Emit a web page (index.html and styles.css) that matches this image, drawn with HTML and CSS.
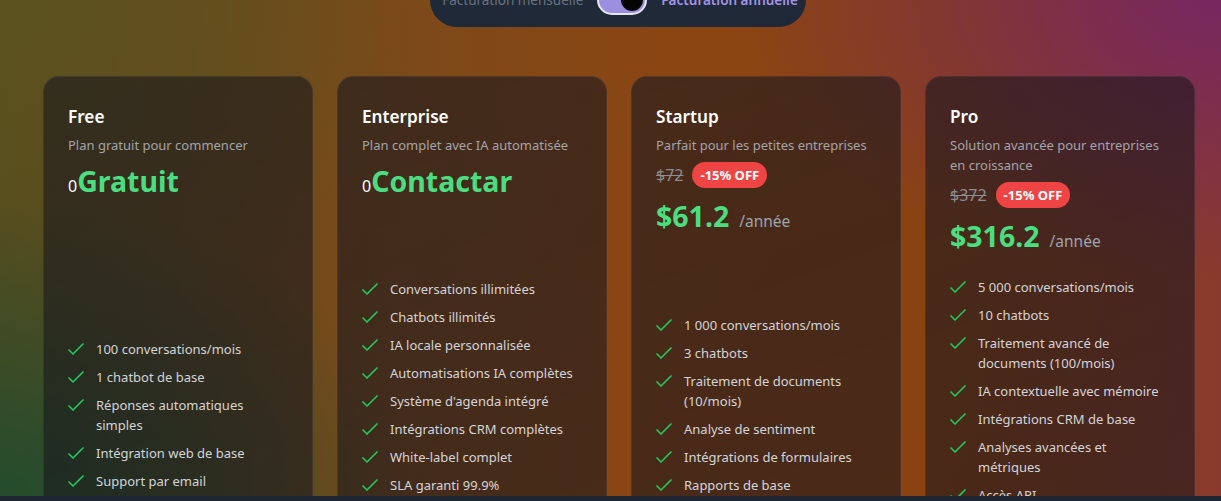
FILE: index.html
```html
<!DOCTYPE html>
<html lang="fr">
<head>
<meta charset="utf-8">
<title>Tarifs</title>
<link rel="stylesheet" href="styles.css">
</head>
<body>
<div class="page">
  <div class="billing">
    <span class="billing__label">Facturation mensuelle</span>
    <span class="switch"><span class="switch__knob"></span></span>
    <span class="billing__label billing__label--active">Facturation annuelle</span>
  </div>

  <div class="plans">
    <div class="card">
      <h3 class="card__title">Free</h3>
      <p class="card__desc">Plan gratuit pour commencer</p>
      <div class="price"><span class="price__zero">0</span><span class="price__value">Gratuit</span></div>
      <ul class="features features--free">
        <li class="feature"><svg class="check" viewBox="4 4 16 16"><path d="M5 13l4 4L19 7"/></svg><span>100 conversations/mois</span></li>
        <li class="feature"><svg class="check" viewBox="4 4 16 16"><path d="M5 13l4 4L19 7"/></svg><span>1 chatbot de base</span></li>
        <li class="feature"><svg class="check" viewBox="4 4 16 16"><path d="M5 13l4 4L19 7"/></svg><span>Réponses automatiques simples</span></li>
        <li class="feature"><svg class="check" viewBox="4 4 16 16"><path d="M5 13l4 4L19 7"/></svg><span>Intégration web de base</span></li>
        <li class="feature"><svg class="check" viewBox="4 4 16 16"><path d="M5 13l4 4L19 7"/></svg><span>Support par email</span></li>
      </ul>
    </div>

    <div class="card">
      <h3 class="card__title">Enterprise</h3>
      <p class="card__desc">Plan complet avec IA automatisée</p>
      <div class="price"><span class="price__zero">0</span><span class="price__value">Contactar</span></div>
      <ul class="features features--enterprise">
        <li class="feature"><svg class="check" viewBox="4 4 16 16"><path d="M5 13l4 4L19 7"/></svg><span>Conversations illimitées</span></li>
        <li class="feature"><svg class="check" viewBox="4 4 16 16"><path d="M5 13l4 4L19 7"/></svg><span>Chatbots illimités</span></li>
        <li class="feature"><svg class="check" viewBox="4 4 16 16"><path d="M5 13l4 4L19 7"/></svg><span>IA locale personnalisée</span></li>
        <li class="feature"><svg class="check" viewBox="4 4 16 16"><path d="M5 13l4 4L19 7"/></svg><span>Automatisations IA complètes</span></li>
        <li class="feature"><svg class="check" viewBox="4 4 16 16"><path d="M5 13l4 4L19 7"/></svg><span>Système d'agenda intégré</span></li>
        <li class="feature"><svg class="check" viewBox="4 4 16 16"><path d="M5 13l4 4L19 7"/></svg><span>Intégrations CRM complètes</span></li>
        <li class="feature"><svg class="check" viewBox="4 4 16 16"><path d="M5 13l4 4L19 7"/></svg><span>White-label complet</span></li>
        <li class="feature"><svg class="check" viewBox="4 4 16 16"><path d="M5 13l4 4L19 7"/></svg><span>SLA garanti 99.9%</span></li>
      </ul>
    </div>

    <div class="card">
      <h3 class="card__title">Startup</h3>
      <p class="card__desc">Parfait pour les petites entreprises</p>
      <div class="discount"><span class="discount__old">$72</span><span class="badge">-15% OFF</span></div>
      <div class="price price--paid"><span class="price__value">$61.2</span><span class="price__period">/année</span></div>
      <ul class="features features--startup">
        <li class="feature"><svg class="check" viewBox="4 4 16 16"><path d="M5 13l4 4L19 7"/></svg><span>1 000 conversations/mois</span></li>
        <li class="feature"><svg class="check" viewBox="4 4 16 16"><path d="M5 13l4 4L19 7"/></svg><span>3 chatbots</span></li>
        <li class="feature"><svg class="check" viewBox="4 4 16 16"><path d="M5 13l4 4L19 7"/></svg><span>Traitement de documents (10/mois)</span></li>
        <li class="feature"><svg class="check" viewBox="4 4 16 16"><path d="M5 13l4 4L19 7"/></svg><span>Analyse de sentiment</span></li>
        <li class="feature"><svg class="check" viewBox="4 4 16 16"><path d="M5 13l4 4L19 7"/></svg><span>Intégrations de formulaires</span></li>
        <li class="feature"><svg class="check" viewBox="4 4 16 16"><path d="M5 13l4 4L19 7"/></svg><span>Rapports de base</span></li>
      </ul>
    </div>

    <div class="card">
      <h3 class="card__title">Pro</h3>
      <p class="card__desc">Solution avancée pour entreprises en croissance</p>
      <div class="discount"><span class="discount__old">$372</span><span class="badge">-15% OFF</span></div>
      <div class="price price--paid"><span class="price__value">$316.2</span><span class="price__period">/année</span></div>
      <ul class="features features--pro">
        <li class="feature"><svg class="check" viewBox="4 4 16 16"><path d="M5 13l4 4L19 7"/></svg><span>5 000 conversations/mois</span></li>
        <li class="feature"><svg class="check" viewBox="4 4 16 16"><path d="M5 13l4 4L19 7"/></svg><span>10 chatbots</span></li>
        <li class="feature"><svg class="check" viewBox="4 4 16 16"><path d="M5 13l4 4L19 7"/></svg><span>Traitement avancé de documents (100/mois)</span></li>
        <li class="feature"><svg class="check" viewBox="4 4 16 16"><path d="M5 13l4 4L19 7"/></svg><span>IA contextuelle avec mémoire</span></li>
        <li class="feature"><svg class="check" viewBox="4 4 16 16"><path d="M5 13l4 4L19 7"/></svg><span>Intégrations CRM de base</span></li>
        <li class="feature"><svg class="check" viewBox="4 4 16 16"><path d="M5 13l4 4L19 7"/></svg><span>Analyses avancées et métriques</span></li>
        <li class="feature"><svg class="check" viewBox="4 4 16 16"><path d="M5 13l4 4L19 7"/></svg><span>Accès API</span></li>
      </ul>
    </div>
  </div>
</div>
<div class="footer-edge"></div>
</body>
</html>
```

FILE: styles.css
```css
* { box-sizing: border-box; }

html, body {
  margin: 0;
  padding: 0;
  height: 100%;
  overflow: hidden;
}

body {
  font-family: "Noto Sans", "Open Sans", Arial, sans-serif;
  background: #1e2533;
  color: #fff;
  display: flex;
  flex-direction: column;
}

.page {
  height: 496px;
  flex: none;
  overflow: hidden;
  background:
    radial-gradient(ellipse 480px 280px at 100% 0%, rgba(118, 38, 98, 0.95) 0%, rgba(118, 38, 98, 0) 100%),
    radial-gradient(ellipse 420px 300px at 0% 100%, rgba(35, 76, 45, 1) 0%, rgba(35, 76, 45, 0) 100%),
    radial-gradient(ellipse 420px 340px at 0% 0%, rgba(92, 82, 30, 1) 0%, rgba(92, 82, 30, 0) 100%),
    linear-gradient(90deg, #574b1e 0%, #7a4a1a 30%, #8b4513 55%, #8b4212 80%, #8a3a2c 100%);
}

.footer-edge {
  flex: 1;
  background: #1e2533;
}

/* billing toggle */
.billing {
  width: 376px;
  height: 54px;
  margin: -27px auto 0 430px;
  background: #1f2937;
  border-radius: 28px;
  display: flex;
  align-items: center;
  justify-content: center;
  gap: 14px;
  padding: 0 14px 0 18px;
  font-size: 13.5px;
}

.billing__label {
  color: #6b7280;
  white-space: nowrap;
}

.billing__label--active {
  color: #a394e8;
  font-weight: 600;
}

.switch {
  width: 50px;
  height: 30px;
  border: 2px solid #e5e7eb;
  border-radius: 15px;
  background: #9d8fe0;
  display: flex;
  align-items: center;
  justify-content: flex-end;
  padding: 2px;
  flex: none;
}

.switch__knob {
  width: 22px;
  height: 22px;
  border-radius: 50%;
  background: #050505;
}

/* plans */
.plans {
  display: flex;
  gap: 24px;
  margin: 49px 0 0 43px;
  align-items: flex-start;
}

.card {
  width: 270px;
  flex: none;
  height: 520px;
  padding: 26px 24px 24px;
  border-radius: 16px;
  background: linear-gradient(160deg, rgba(26, 24, 30, 0.6) 0%, rgba(22, 20, 28, 0.55) 100%);
  border: 1px solid rgba(255, 255, 255, 0.06);
}

.card__title {
  margin: 0;
  font-size: 17.2px;
  line-height: 28px;
  font-weight: 600;
  color: #fff;
}

.card__desc {
  margin: 4px 0 0;
  font-size: 13px;
  line-height: 20px;
  color: #a3a3a8;
}

.price {
  margin-top: 8px;
  display: flex;
  align-items: baseline;
  height: 36px;
}

.price__zero {
  font-size: 16px;
  color: #fff;
}

.price__value {
  font-size: 28.5px;
  line-height: 36px;
  font-weight: 700;
  color: #4ade80;
}

.price--paid {
  margin-top: 10px;
  gap: 10px;
}

.price__period {
  font-size: 15.5px;
  color: #9ca3af;
}

.discount {
  margin-top: 7px;
  display: flex;
  align-items: center;
  gap: 9px;
  height: 26px;
}

.discount__old {
  font-size: 16px;
  color: #8b8d93;
  text-decoration: line-through;
}

.badge {
  background: #ef4444;
  color: #fff;
  font-size: 13px;
  font-weight: 700;
  line-height: 26px;
  padding: 0 8px;
  border-radius: 13px;
}

.features {
  list-style: none;
  margin: 0;
  padding: 0;
  display: flex;
  flex-direction: column;
  gap: 8px;
}

.features--free { margin-top: 140px; }
.features--enterprise { margin-top: 80px; }
.features--startup { margin-top: 81px; }
.features--pro { margin-top: 23px; }

.feature {
  display: flex;
  gap: 12px;
  font-size: 13px;
  line-height: 20px;
  color: #d4d4d8;
}

.check {
  width: 16px;
  height: 16px;
  flex: none;
  margin-top: 2px;
  fill: none;
  stroke: #22c55e;
  stroke-width: 1.7;
  stroke-linecap: round;
  stroke-linejoin: round;
}
```
